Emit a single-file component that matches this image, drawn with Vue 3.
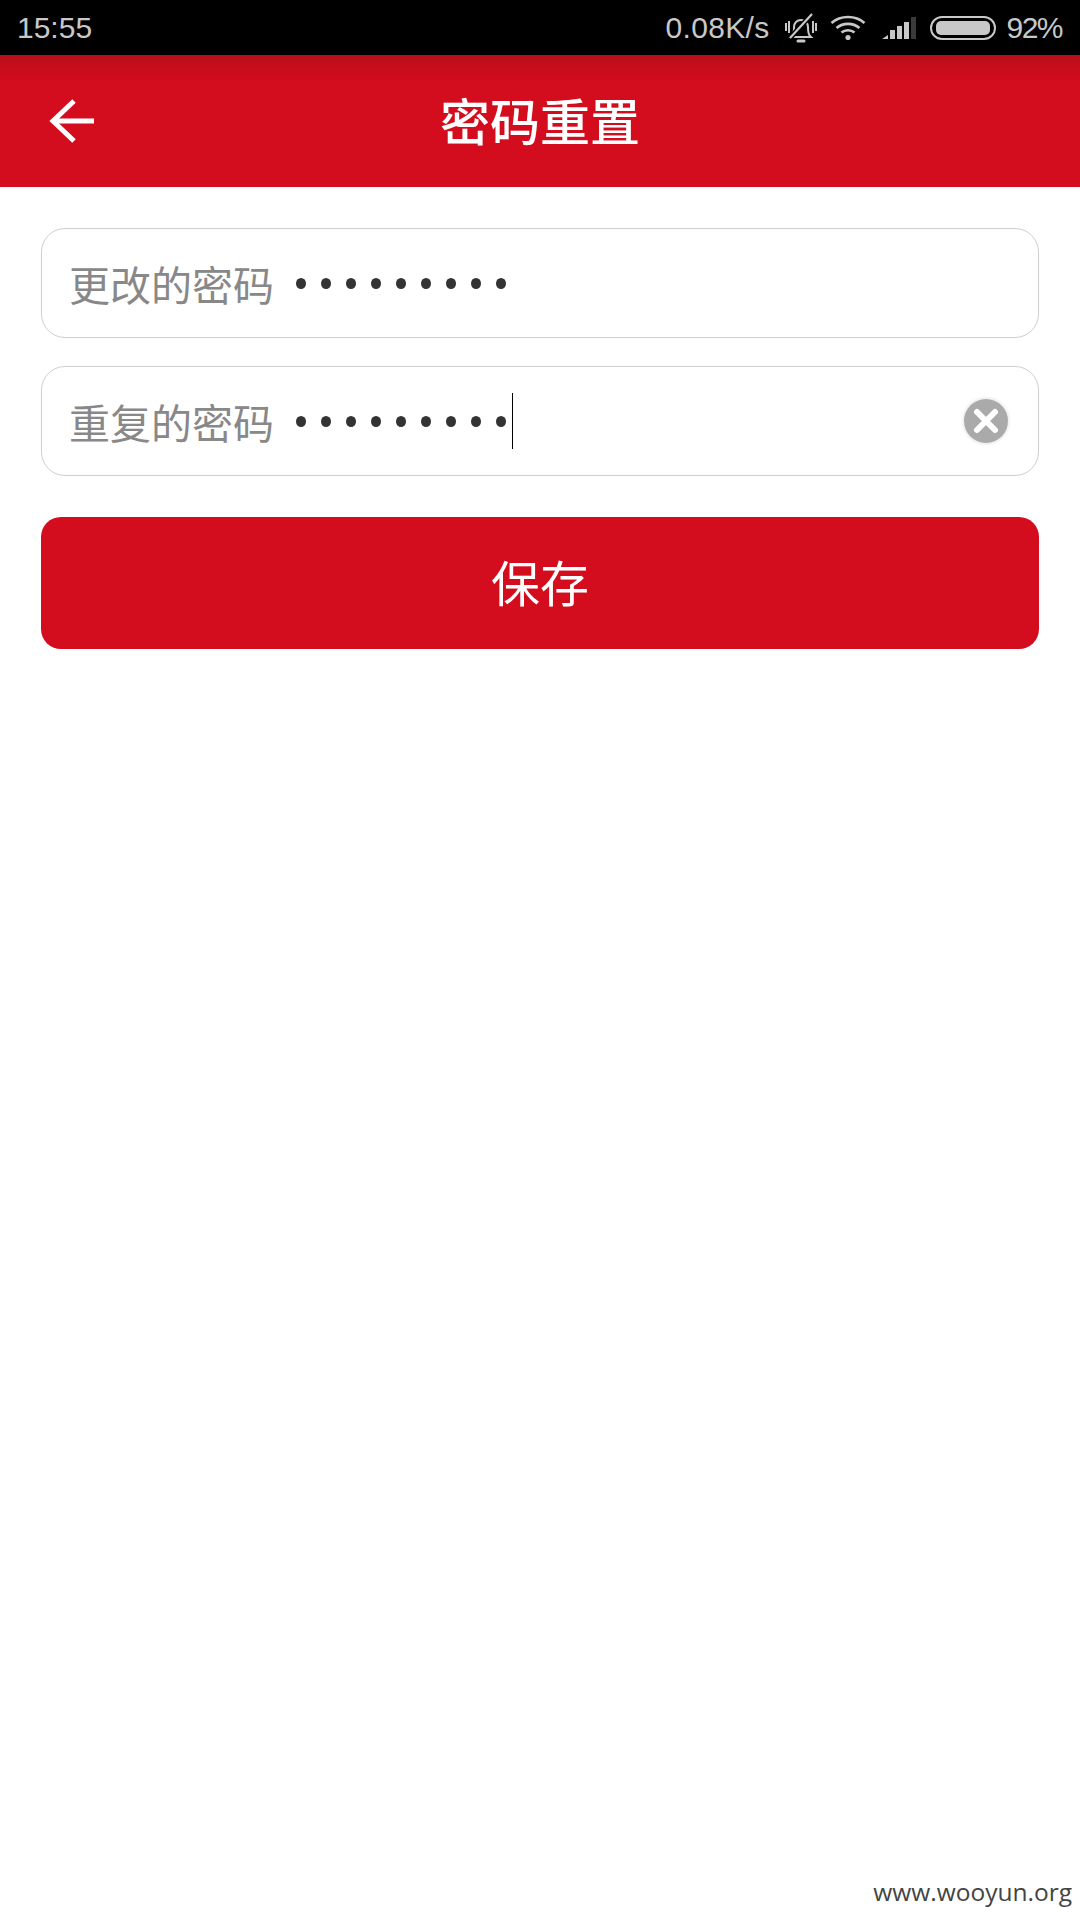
<template>
  <div class="page">
    <div class="status-bar">
      <span class="time">15:55</span>
      <div class="status-right">
        <span class="speed">0.08K/s</span>
        <svg class="ic-bell" width="32" height="30" viewBox="0 0 32 30" fill="none" stroke="#c8c8c8" stroke-width="2">
          <path d="M7 23c2-2 2-4 2-9 0-4 3-7 7-7s7 3 7 7c0 5 0 7 2 9l1 1H6z" />
          <path d="M13 28h6" stroke-width="3" stroke-linecap="round" />
          <path d="M5 25L27 1" stroke="#000" stroke-width="5" />
          <path d="M5 25L27 1" stroke-width="2.200" />
          <path d="M1 10v8M4 8v12M28 8v12M31 10v8" />
        </svg>
        <svg class="ic-wifi" width="36" height="25" viewBox="0 0 36 25" fill="none" stroke="#c8c8c8" stroke-width="2.600">
          <path d="M1.500 8c9-8 24-8 33 0" />
          <path d="M6.500 13c6.500-5.500 16.500-5.500 23 0" />
          <path d="M11.500 17.500c3.500-3 9.500-3 13 0" />
          <circle cx="18" cy="22.500" r="2.600" fill="#c8c8c8" stroke="none" />
        </svg>
        <svg class="ic-signal" width="34" height="22" viewBox="0 0 34 22">
          <path d="M0 22l6-4v4z" fill="#c8c8c8" />
          <rect x="8" y="13" width="5" height="9" fill="#c8c8c8" />
          <rect x="15" y="9" width="5" height="13" fill="#c8c8c8" />
          <rect x="22" y="5" width="5" height="17" fill="#c8c8c8" />
          <rect x="29" y="0" width="5" height="22" fill="#3a3a3a" />
        </svg>
        <div class="battery"><div class="battery-fill"></div></div>
        <span class="percent">92%</span>
      </div>
    </div>

    <header class="top-bar">
      <svg class="back" width="48" height="48" viewBox="0 0 48 48" fill="none" stroke="#fff" stroke-width="5">
        <path d="M46 24H5" />
        <path d="M26 4L5 24l21 20" />
      </svg>
      <h1 class="title">密码重置</h1>
    </header>

    <main class="form">
      <div v-for="field in fields" :key="field.label" class="field">
        <span class="label">{{ field.label }}</span>
        <div class="dots">
          <i v-for="n in 9" :key="n" class="dot"></i>
          <i v-if="field.focused" class="caret"></i>
        </div>
        <div v-if="field.focused" class="clear">
          <svg width="30" height="30" viewBox="0 0 30 30" stroke="#fff" stroke-width="6" stroke-linecap="round">
            <path d="M6 6l18 18M24 6L6 24" />
          </svg>
        </div>
      </div>
      <button class="save">保存</button>
    </main>

    <span class="watermark">www.wooyun.org</span>
  </div>
</template>

<script setup>
const fields = [
  { label: '更改的密码', focused: false },
  { label: '重复的密码', focused: true }
];
</script>

<style scoped>
.page {
  position: relative;
  width: 1080px;
  height: 1920px;
  overflow: hidden;
  background: #fff;
  font-family: "Liberation Sans", "Noto Sans CJK SC", sans-serif;
}

.status-bar {
  height: 55px;
  background: #000;
  color: #c8c8c8;
  display: flex;
  justify-content: space-between;
  align-items: center;
  padding: 0 18px 0 17px;
  font-size: 30px;
}

.status-right {
  display: flex;
  align-items: center;
}

.speed {
  margin-right: 16px;
  letter-spacing: 0.3px;
}

.ic-wifi {
  margin-left: 13px;
}

.ic-signal {
  margin-left: 16px;
}

.battery {
  margin-left: 14px;
  width: 66px;
  height: 24px;
  box-sizing: border-box;
  border: 2px solid #c8c8c8;
  border-radius: 12px;
  padding: 3px 4px;
}

.battery-fill {
  width: 54px;
  height: 14px;
  background: #c8c8c8;
  border-radius: 5px;
}

.percent {
  margin-left: 10px;
  letter-spacing: -1.500px;
}

.top-bar {
  height: 132px;
  background: linear-gradient(#b50f1c 0, #c90c1c 14px, #d40d1e 30px);
  display: flex;
  align-items: center;
  justify-content: center;
  position: relative;
}

.back {
  position: absolute;
  left: 48px;
  top: 42px;
}

.title {
  margin: 0 0 4px;
  color: #fff;
  font-size: 50px;
  font-weight: 500;
  font-family: "Noto Sans CJK SC", sans-serif;
}

.form {
  display: flex;
  flex-direction: column;
  gap: 28px;
  padding: 41px 41px 0;
}

.field {
  height: 110px;
  box-sizing: border-box;
  border: 1px solid #cfcfcf;
  border-radius: 24px;
  display: flex;
  align-items: center;
  padding-left: 27px;
}

.label {
  width: 227px;
  color: #888;
  font-size: 41px;
  font-family: "Noto Sans CJK SC", sans-serif;
}

.dots {
  display: flex;
  align-items: center;
  gap: 15px;
  flex: 1;
  position: relative;
}

.dot {
  width: 10px;
  height: 11px;
  border-radius: 50%;
  background: #333;
}

.caret {
  position: absolute;
  left: 216px;
  top: -23px;
  width: 1px;
  height: 56px;
  background: #000;
}

.clear {
  width: 44px;
  height: 44px;
  margin-right: 30px;
  border-radius: 50%;
  background: #aaa;
  box-shadow: 0 0 2px 2px #eef1f1;
  display: flex;
  align-items: center;
  justify-content: center;
}

.save {
  margin-top: 13px;
  height: 132px;
  border: 0;
  border-radius: 20px;
  background: #d40d1e;
  color: #fff;
  font-size: 49px;
  padding: 0 0 6px;
  font-family: "Noto Sans CJK SC", sans-serif;
}

.watermark {
  position: absolute;
  right: 8px;
  bottom: 12px;
  color: #444;
  font-size: 24.500px;
  font-family: "Open Sans", sans-serif;
}
</style>
